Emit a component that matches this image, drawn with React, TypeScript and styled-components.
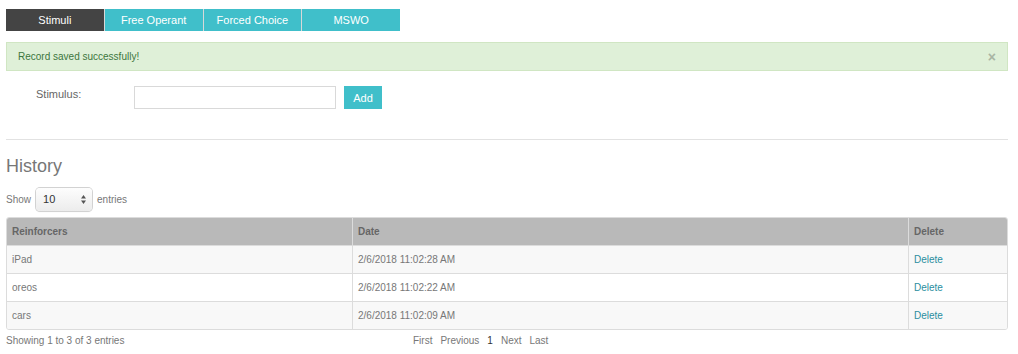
import React, { useState } from 'react';
import styled, { createGlobalStyle } from 'styled-components';

const GlobalStyle = createGlobalStyle`
  body {
    margin: 0;
    background: #fff;
    font-family: "Liberation Sans", Arial, Helvetica, sans-serif;
    font-size: 10px;
    color: #777;
  }
`;

const Page = styled.div`
  width: 1002px;
  padding: 9px 10px 0 6px;
`;

const Tabs = styled.div`
  display: flex;
  width: 394px;
`;

const Tab = styled.button<{ $active?: boolean }>`
  flex: 1;
  height: 22px;
  border: none;
  border-left: 1px solid ${p => (p.$active ? '#444' : '#d8d8d8')};
  padding: 0;
  background: ${p => (p.$active ? '#444444' : '#40bfca')};
  color: #fff;
  font-family: inherit;
  font-size: 11px;
  cursor: pointer;

  &:first-child {
    border-left: none;
  }
`;

const Alert = styled.div`
  margin-top: 11px;
  height: 27px;
  display: flex;
  align-items: center;
  justify-content: space-between;
  padding: 0 11px 0 11px;
  background: #dff0d8;
  border: 1px solid #d0e6c3;
  color: #3c763d;
  font-size: 10px;
`;

const Close = styled.span`
  color: #a9b5a4;
  font-size: 14px;
  font-weight: bold;
  line-height: 1;
`;

const FormRow = styled.div`
  display: flex;
  align-items: flex-start;
  margin-top: 15px;
  padding-left: 30px;
`;

const Label = styled.label`
  width: 98px;
  padding-top: 2px;
  font-size: 11px;
  color: #666;
`;

const TextInput = styled.input`
  box-sizing: border-box;
  width: 202px;
  height: 23px;
  border: 1px solid #d9d9d9;
  margin: 0;
  padding: 0 6px;
  font-family: inherit;
`;

const AddButton = styled.button`
  margin-left: 8px;
  height: 23px;
  width: 38px;
  border: none;
  padding: 0;
  background: #40bfca;
  color: #fff;
  font-family: inherit;
  font-size: 11px;
`;

const Rule = styled.hr`
  margin: 30px 0 0;
  border: none;
  border-top: 1px solid #e2e2e2;
`;

const Heading = styled.h2`
  margin: 16px 0 0;
  font-size: 18px;
  line-height: 20px;
  font-weight: normal;
  color: #777;
`;

const LengthRow = styled.div`
  display: flex;
  align-items: center;
  gap: 5px;
  margin-top: 11px;
  height: 24px;
`;

const SelectBox = styled.div`
  position: relative;
  box-sizing: border-box;
  width: 56px;
  height: 23px;
  display: flex;
  align-items: center;
  padding-left: 7px;
  border-radius: 4px;
  background: linear-gradient(#fdfdfd, #ececec);
  box-shadow: 0 0 0 1px #d2d2d2, 0 1px 1px rgba(0, 0, 0, 0.12);
  color: #333;
  font-size: 11px;
`;

const Spinner = styled.svg`
  position: absolute;
  right: 6px;
  top: 7px;
`;

const TableWrap = styled.div`
  margin-top: 6px;
  border: 1px solid #dcdcdc;
  border-radius: 3px;
  overflow: hidden;
`;

const Table = styled.table`
  width: 100%;
  border-collapse: collapse;
  table-layout: fixed;
`;

const Th = styled.th<{ $w?: number }>`
  width: ${p => (p.$w ? `${p.$w}px` : 'auto')};
  height: 27px;
  padding: 0 5px;
  text-align: left;
  background: #b9b9b9;
  color: #666;
  font-size: 10px;
  font-weight: bold;
  border-left: 1px solid #dcdcdc;

  &:first-child {
    border-left: none;
  }
`;

const Tr = styled.tr<{ $odd: boolean }>`
  background: ${p => (p.$odd ? '#f8f8f8' : '#fff')};
`;

const Td = styled.td`
  height: 27px;
  padding: 0 5px;
  border-top: 1px solid #dcdcdc;
  border-left: 1px solid #dcdcdc;
  color: #777;

  &:first-child {
    border-left: none;
  }
`;

const DeleteLink = styled.a`
  color: #2a8ea0;
  text-decoration: none;
  cursor: pointer;
`;

const Footer = styled.div`
  display: flex;
  align-items: center;
  margin-top: 5px;
`;

const Info = styled.div`
  width: 407px;
`;

const Pager = styled.div`
  display: flex;
  gap: 8px;
`;

const PageItem = styled.span<{ $current?: boolean }>`
  color: ${p => (p.$current ? '#333' : '#777')};
  cursor: pointer;
`;

const rows = [
  { name: 'iPad', date: '2/6/2018 11:02:28 AM' },
  { name: 'oreos', date: '2/6/2018 11:02:22 AM' },
  { name: 'cars', date: '2/6/2018 11:02:09 AM' },
];

const tabs = ['Stimuli', 'Free Operant', 'Forced Choice', 'MSWO'];

export default function App() {
  const [active, setActive] = useState('Stimuli');

  return (
    <>
      <GlobalStyle />
      <Page>
        <Tabs>
          {tabs.map(t => (
            <Tab key={t} $active={t === active} onClick={() => setActive(t)}>
              {t}
            </Tab>
          ))}
        </Tabs>

        <Alert>
          <span>Record saved successfully!</span>
          <Close>×</Close>
        </Alert>

        <FormRow>
          <Label>Stimulus:</Label>
          <TextInput type="text" />
          <AddButton>Add</AddButton>
        </FormRow>

        <Rule />

        <Heading>History</Heading>

        <LengthRow>
          <span>Show</span>
          <SelectBox>
            10
            <Spinner width="5" height="9" viewBox="0 0 5 9">
              <path d="M2.5 0 L5 3.5 L0 3.5 Z" fill="#555" />
              <path d="M0 5.5 L5 5.5 L2.5 9 Z" fill="#555" />
            </Spinner>
          </SelectBox>
          <span>entries</span>
        </LengthRow>

        <TableWrap>
          <Table>
            <thead>
              <tr>
                <Th $w={335}>Reinforcers</Th>
                <Th>Date</Th>
                <Th $w={88}>Delete</Th>
              </tr>
            </thead>
            <tbody>
              {rows.map((r, i) => (
                <Tr key={r.name} $odd={i % 2 === 0}>
                  <Td>{r.name}</Td>
                  <Td>{r.date}</Td>
                  <Td>
                    <DeleteLink>Delete</DeleteLink>
                  </Td>
                </Tr>
              ))}
            </tbody>
          </Table>
        </TableWrap>

        <Footer>
          <Info>Showing 1 to 3 of 3 entries</Info>
          <Pager>
            <PageItem>First</PageItem>
            <PageItem>Previous</PageItem>
            <PageItem $current>1</PageItem>
            <PageItem>Next</PageItem>
            <PageItem>Last</PageItem>
          </Pager>
        </Footer>
      </Page>
    </>
  );
}
